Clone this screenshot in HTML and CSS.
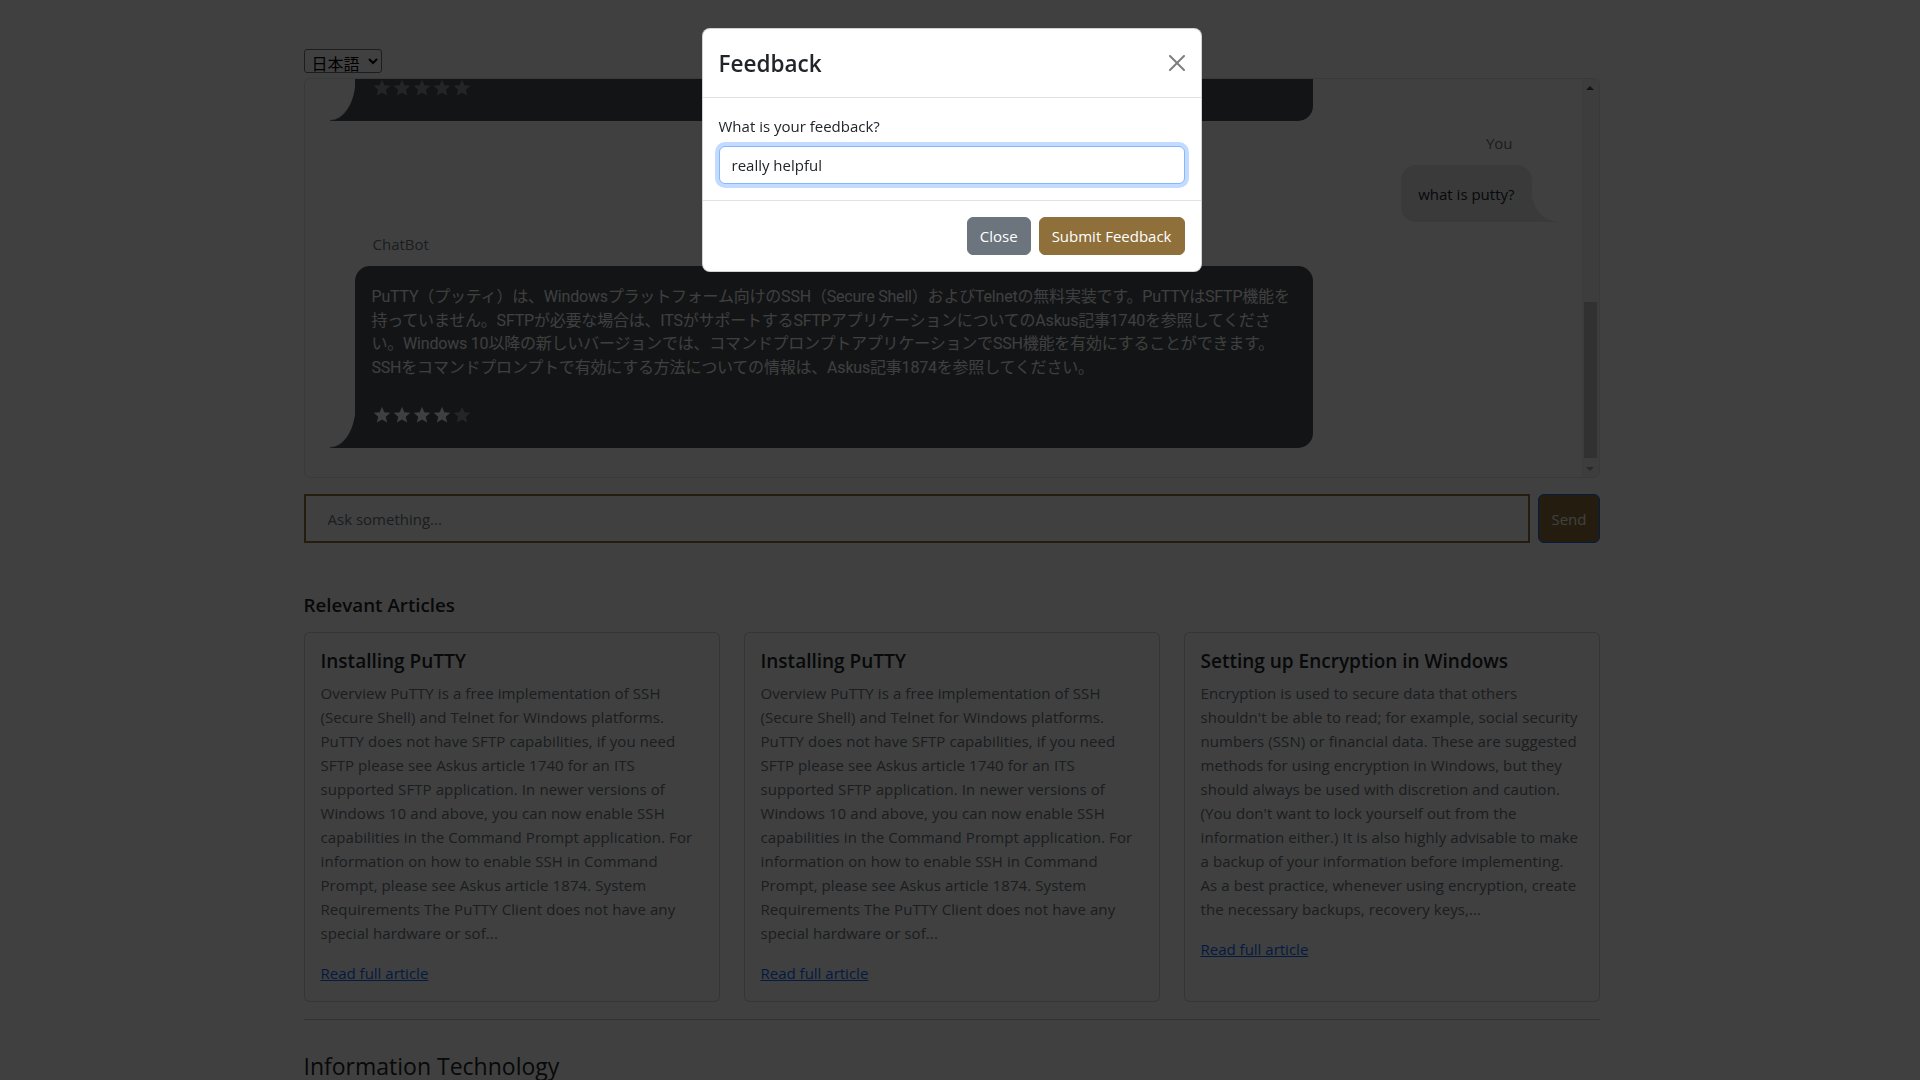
FILE: index.html
```html
<!DOCTYPE html>
<html lang="en">
<head>
<meta charset="utf-8">
<title>Askus ChatBot</title>
<link rel="stylesheet" href="styles.css">
</head>
<body class="modal-open">
<main class="container">
  <div class="lang-row">
    <select class="lang-select" aria-label="Language">
      <option>English</option>
      <option selected>日本語</option>
    </select>
  </div>

  <div class="chat-frame">
    <div class="chat-box">
      <div class="chat-log">
        <div class="msg msg-bot">
          <div class="msg-label">ChatBot</div>
          <div class="bubble bubble-bot">
            <p class="bubble-text">PuTTY is a free implementation of SSH (Secure Shell) and Telnet for Windows platforms. PuTTY does not have SFTP capabilities, if you need SFTP please see Askus article 1740 for an ITS supported SFTP application. In newer versions of Windows 10 and above, you can now enable SSH capabilities in the Command Prompt application. For information on how to enable SSH in Command Prompt, please see Askus article 1874.</p>
            <div class="stars" aria-label="Rate this answer">
              <svg class="star" viewBox="0 0 24 24"><path d="M12 17.27L18.18 21l-1.64-7.03L22 9.24l-7.19-.61L12 2 9.19 8.63 2 9.24l5.46 4.73L5.82 21z"/></svg>
              <svg class="star" viewBox="0 0 24 24"><path d="M12 17.27L18.18 21l-1.64-7.03L22 9.24l-7.19-.61L12 2 9.19 8.63 2 9.24l5.46 4.73L5.82 21z"/></svg>
              <svg class="star" viewBox="0 0 24 24"><path d="M12 17.27L18.18 21l-1.64-7.03L22 9.24l-7.19-.61L12 2 9.19 8.63 2 9.24l5.46 4.73L5.82 21z"/></svg>
              <svg class="star" viewBox="0 0 24 24"><path d="M12 17.27L18.18 21l-1.64-7.03L22 9.24l-7.19-.61L12 2 9.19 8.63 2 9.24l5.46 4.73L5.82 21z"/></svg>
              <svg class="star" viewBox="0 0 24 24"><path d="M12 17.27L18.18 21l-1.64-7.03L22 9.24l-7.19-.61L12 2 9.19 8.63 2 9.24l5.46 4.73L5.82 21z"/></svg>
            </div>
          </div>
        </div>
        <div class="msg msg-user">
          <div class="msg-label">You</div>
          <div class="bubble bubble-user">what is putty?</div>
        </div>
        <div class="msg msg-bot">
          <div class="msg-label">ChatBot</div>
          <div class="bubble bubble-bot" lang="ja">
            <p class="bubble-text">PuTTY（プッティ）は、Windowsプラットフォーム向けのSSH（Secure Shell）およびTelnetの無料実装です。PuTTYはSFTP機能を持っていません。SFTPが必要な場合は、ITSがサポートするSFTPアプリケーションについてのAskus記事1740を参照してください。Windows 10以降の新しいバージョンでは、コマンドプロンプトアプリケーションでSSH機能を有効にすることができます。SSHをコマンドプロンプトで有効にする方法についての情報は、Askus記事1874を参照してください。</p>
            <div class="stars" aria-label="Rated 4 of 5">
              <svg class="star on" viewBox="0 0 24 24"><path d="M12 17.27L18.18 21l-1.64-7.03L22 9.24l-7.19-.61L12 2 9.19 8.63 2 9.24l5.46 4.73L5.82 21z"/></svg>
              <svg class="star on" viewBox="0 0 24 24"><path d="M12 17.27L18.18 21l-1.64-7.03L22 9.24l-7.19-.61L12 2 9.19 8.63 2 9.24l5.46 4.73L5.82 21z"/></svg>
              <svg class="star on" viewBox="0 0 24 24"><path d="M12 17.27L18.18 21l-1.64-7.03L22 9.24l-7.19-.61L12 2 9.19 8.63 2 9.24l5.46 4.73L5.82 21z"/></svg>
              <svg class="star on" viewBox="0 0 24 24"><path d="M12 17.27L18.18 21l-1.64-7.03L22 9.24l-7.19-.61L12 2 9.19 8.63 2 9.24l5.46 4.73L5.82 21z"/></svg>
              <svg class="star" viewBox="0 0 24 24"><path d="M12 17.27L18.18 21l-1.64-7.03L22 9.24l-7.19-.61L12 2 9.19 8.63 2 9.24l5.46 4.73L5.82 21z"/></svg>
            </div>
          </div>
        </div>
      </div>
    </div>
    <div class="scrollbar" aria-hidden="true">
      <div class="scroll-btn scroll-up"><svg width="8" height="4" viewBox="0 0 8 4"><polygon points="4,0 8,4 0,4"/></svg></div>
      <div class="scroll-track"><div class="scroll-thumb"></div></div>
      <div class="scroll-btn scroll-down"><svg width="8" height="4" viewBox="0 0 8 4"><polygon points="0,0 8,0 4,4"/></svg></div>
    </div>
  </div>

  <form class="ask-row" onsubmit="return false">
    <input class="ask-input" type="text" placeholder="Ask something...">
    <button class="btn btn-send" type="button">Send</button>
  </form>

  <section class="articles">
    <h5 class="section-title">Relevant Articles</h5>
    <div class="card-grid">
      <div class="card">
        <h5 class="card-title">Installing PuTTY</h5>
        <p class="card-text">Overview PuTTY is a free implementation of SSH (Secure Shell) and Telnet for Windows platforms. PuTTY does not have SFTP capabilities, if you need SFTP please see Askus article 1740 for an ITS supported SFTP application. In newer versions of Windows 10 and above, you can now enable SSH capabilities in the Command Prompt application. For information on how to enable SSH in Command Prompt, please see Askus article 1874. System Requirements The PuTTY Client does not have any special hardware or sof...</p>
        <a class="card-link" href="#">Read full article</a>
      </div>
      <div class="card">
        <h5 class="card-title">Installing PuTTY</h5>
        <p class="card-text">Overview PuTTY is a free implementation of SSH (Secure Shell) and Telnet for Windows platforms. PuTTY does not have SFTP capabilities, if you need SFTP please see Askus article 1740 for an ITS supported SFTP application. In newer versions of Windows 10 and above, you can now enable SSH capabilities in the Command Prompt application. For information on how to enable SSH in Command Prompt, please see Askus article 1874. System Requirements The PuTTY Client does not have any special hardware or sof...</p>
        <a class="card-link" href="#">Read full article</a>
      </div>
      <div class="card">
        <h5 class="card-title">Setting up Encryption in Windows</h5>
        <p class="card-text">Encryption is used to secure data that others shouldn't be able to read; for example, social security numbers (SSN) or financial data. These are suggested methods for using encryption in Windows, but they should always be used with discretion and caution. (You don't want to lock yourself out from the information either.) It is also highly advisable to make a backup of your information before implementing. As a best practice, whenever using encryption, create the necessary backups, recovery keys,...</p>
        <a class="card-link" href="#">Read full article</a>
      </div>
    </div>
  </section>

  <hr class="divider">
  <h4 class="category-title">Information Technology</h4>
</main>

<div class="modal-backdrop"></div>
<div class="modal" role="dialog" aria-modal="true" aria-labelledby="feedbackTitle">
  <div class="modal-dialog">
    <div class="modal-content">
      <div class="modal-header">
        <h5 class="modal-title" id="feedbackTitle">Feedback</h5>
        <button class="btn-close" type="button" aria-label="Close">
          <svg viewBox="0 0 16 16" width="16" height="16"><path d="M.293.293a1 1 0 0 1 1.414 0L8 6.586 14.293.293a1 1 0 1 1 1.414 1.414L9.414 8l6.293 6.293a1 1 0 0 1-1.414 1.414L8 9.414l-6.293 6.293a1 1 0 0 1-1.414-1.414L6.586 8 .293 1.707a1 1 0 0 1 0-1.414z"/></svg>
        </button>
      </div>
      <div class="modal-body">
        <label class="form-label" for="feedbackInput">What is your feedback?</label>
        <input class="form-control" id="feedbackInput" type="text" value="really helpful">
      </div>
      <div class="modal-footer">
        <button class="btn btn-secondary" type="button">Close</button>
        <button class="btn btn-submit" type="button">Submit Feedback</button>
      </div>
    </div>
  </div>
</div>
</body>
</html>
```
FILE: styles.css
```css
*, *::before, *::after { box-sizing: border-box; }

html { font-size: 16px; }

body {
  margin: 0;
  padding-right: 17px;
  overflow: hidden;
  font-family: "Open Sans", "Noto Sans CJK JP", sans-serif;
  font-size: 15px;
  line-height: 24px;
  color: #212529;
  background: #fff;
}

.container {
  max-width: 1320px;
  margin: 0 auto;
  padding: 49px 12px 0;
}

/* language selector */
.lang-row { display: flex; margin-bottom: 5px; }
.lang-select {
  width: 78px;
  height: 24px;
  padding: 0 0 0 3px;
  font-family: "Noto Sans CJK JP", sans-serif;
  font-size: 16px;
  line-height: 20px;
  color: #000;
  background-color: #fff;
  border: 1px solid #767676;
  border-radius: 3px;
}

/* chat window */
.chat-frame {
  display: flex;
  height: 400px;
  border: 1px solid #dee2e6;
  border-radius: 6px;
  overflow: hidden;
}
.chat-box {
  flex: 1;
  min-width: 0;
  overflow-y: auto;
  scrollbar-width: none;
  display: flex;
  flex-direction: column-reverse;
}

.scrollbar {
  flex-shrink: 0;
  width: 17px;
  display: flex;
  flex-direction: column;
  background: #f1f1f1;
}
.scroll-btn {
  height: 17px;
  flex-shrink: 0;
  display: flex;
  align-items: center;
  justify-content: center;
}
.scroll-btn svg { display: block; }
.scroll-up svg { fill: #505050; }
.scroll-down svg { fill: #a3a3a3; }
.scroll-track {
  flex: 1;
  display: flex;
  flex-direction: column;
  justify-content: flex-end;
  padding: 0 2px 2px;
}
.scroll-thumb {
  height: 156px;
  background: #c1c1c1;
}

.chat-log {
  flex-shrink: 0;
  padding: 20px 25px 29px;
}

.msg { display: flex; flex-direction: column; margin-top: 10px; }
.msg:first-child { margin-top: 0; }
.msg-bot { align-items: flex-start; }
.msg-user { align-items: flex-end; }

.msg-label {
  color: #6c757d;
  margin-bottom: 10px;
}
.msg-bot .msg-label { padding-left: 43px; }
.msg-user .msg-label { padding-right: 44px; }

.bubble {
  position: relative;
  border-radius: 15px;
}

.bubble-bot {
  max-width: 78.1%;
  margin-left: 25px;
  padding: 19px 17px 23px;
  background: #495057;
  color: #f8f9fa;
  border-bottom-left-radius: 0;
  font-family: "Roboto", "Noto Sans CJK JP", sans-serif;
  font-size: 16px;
  line-height: 23.5px;
  letter-spacing: -0.2px;
}
.bubble-bot::before {
  content: "";
  position: absolute;
  left: -25px;
  bottom: 0;
  width: 26px;
  height: 42px;
  background: radial-gradient(ellipse 26px 42px at 0 0, transparent calc(100% - 1px), #495057 100%);
}

.bubble-text { margin: 0 0 26px; }

.bubble-user {
  margin-right: 25px;
  padding: 17px 17px 16px;
  background: #e5e5ea;
  color: #212529;
  border-bottom-right-radius: 0;
}
.bubble-user::after {
  content: "";
  position: absolute;
  right: -25px;
  bottom: 0;
  width: 26px;
  height: 32px;
  background: radial-gradient(ellipse 26px 32px at 100% 0, transparent calc(100% - 1px), #e5e5ea 100%);
}

.stars { display: flex; height: 20px; }
.star { width: 20px; height: 20px; fill: #8f959b; }
.star.on { fill: #f8f9fa; }

/* ask row */
.ask-row {
  display: flex;
  gap: 8px;
  margin: 16px 0 0;
}
.ask-input {
  flex: 1;
  min-width: 0;
  height: 49px;
  padding: 0 20px 0 22px;
  font-family: inherit;
  font-size: 15px;
  color: #212529;
  background: #fff;
  border: 2px solid #8f6f3a;
  border-radius: 0;
  outline: none;
}
.ask-input::placeholder { color: #6c757d; }

.btn {
  font-family: inherit;
  font-size: 15px;
  line-height: 24px;
  padding: 6px 12px;
  border: 1px solid transparent;
  border-radius: 6px;
  color: #fff;
  cursor: pointer;
}
.btn-send {
  background: #8f6f3a;
  border-color: #0d6efd;
}

/* articles */
.articles { margin-top: 50px; }
.section-title {
  margin: 0 0 15px;
  font-size: 18.75px;
  font-weight: 600;
  line-height: 24px;
}
.card-grid {
  display: grid;
  grid-template-columns: repeat(3, 1fr);
  gap: 24px;
}
.card {
  padding: 16px;
  background: #fff;
  border: 1px solid rgba(0, 0, 0, .175);
  border-radius: 6px;
}
.card-title {
  margin: 0 0 8px;
  font-size: 19px;
  font-weight: 600;
  line-height: 24px;
}
.card-text {
  margin: 0 0 16px;
  color: #6c757d;
  letter-spacing: 0.09px;
}
.card-link { color: #0d6efd; text-decoration: underline; }

.divider {
  margin: 17px 0 0;
  border: 0;
  border-top: 1px solid rgba(33, 37, 41, .25);
}
.category-title {
  margin: 32px 0 0;
  font-size: 23px;
  font-weight: 400;
  line-height: 28px;
}

/* modal */
.modal-backdrop {
  position: fixed;
  inset: 0;
  background: rgba(0, 0, 0, .75);
  z-index: 1050;
}
.modal {
  position: fixed;
  inset: 0;
  padding-right: 17px;
  overflow: hidden;
  z-index: 1055;
}
.modal-dialog {
  width: 500px;
  margin: 28px auto;
}
.modal-content {
  background: #fff;
  border: 1px solid rgba(0, 0, 0, .175);
  border-radius: 8px;
}
.modal-header {
  display: flex;
  align-items: center;
  padding: 17px 16px 15px;
  border-bottom: 1px solid #dee2e6;
}
.modal-title {
  margin: 0;
  font-size: 22.5px;
  font-weight: 600;
  line-height: 36px;
}
.btn-close {
  display: flex;
  align-items: center;
  justify-content: center;
  width: 24px;
  height: 24px;
  padding: 4px;
  margin: -2px -4px 0 auto;
  background: transparent;
  border: 0;
  opacity: .5;
  cursor: pointer;
}
.btn-close svg { display: block; fill: #000; }

.modal-body { padding: 16px; }
.form-label { display: block; margin-bottom: 8px; }
.form-control {
  display: block;
  width: 100%;
  height: 38px;
  padding: 6px 12px;
  font-family: inherit;
  font-size: 15px;
  color: #212529;
  background: #fff;
  border: 1px solid #86b7fe;
  border-radius: 6px;
  box-shadow: 0 0 0 4px rgba(13, 110, 253, .25);
  outline: none;
}

.modal-footer {
  display: flex;
  justify-content: flex-end;
  padding: 12px;
  border-top: 1px solid #dee2e6;
}
.modal-footer .btn { margin: 4px; }
.btn-secondary { background: #6c757d; border-color: #6c757d; }
.btn-submit { background: #8f6f3a; border-color: #8f6f3a; }
```
